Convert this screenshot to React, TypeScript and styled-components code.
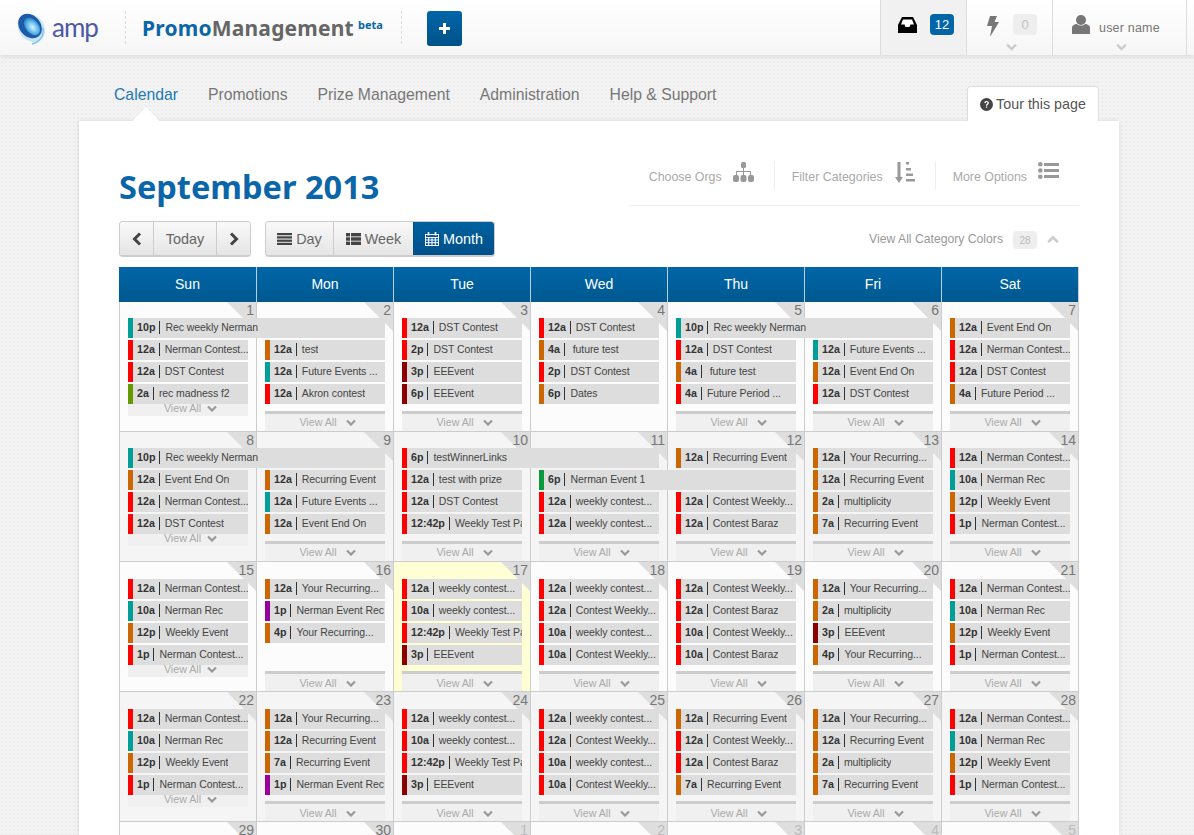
import React from "react";
import styled, { createGlobalStyle } from "styled-components";

const Global = createGlobalStyle`
  html, body { margin: 0; padding: 0; height: 835px; overflow: hidden; }
  body {
    font-family: "Liberation Sans", Arial, sans-serif;
    background-color: #f3f3f3;
    background-image: radial-gradient(#ececec 1px, transparent 1px);
    background-size: 4px 4px;
  }
`;

const Page = styled.div`
  height: 835px;
  overflow: hidden;
`;

const TopBar = styled.header`
  height: 55px;
  display: flex;
  align-items: stretch;
  background: linear-gradient(#ffffff, #f6f6f6);
  box-shadow: 0 1px 4px rgba(0, 0, 0, 0.12);
  position: relative;
`;

const LogoBox = styled.div`
  width: 125px;
  flex: none;
  display: flex;
  align-items: center;
  padding-left: 17px;
  box-sizing: border-box;
  gap: 5px;
`;

const AmpWord = styled.span`
  font-family: "Lato", sans-serif;
  font-weight: 400;
  font-size: 26px;
  line-height: 30px;
  color: #4f57a6;
  letter-spacing: -1px;
  margin-top: -2px;
`;

const DashedBlock = styled.div`
  border-left: 1px dashed #ddd;
  border-right: 1px dashed #ddd;
  margin: 11px 0;
  width: 277px;
  height: 33px;
  flex: none;
  display: flex;
  align-items: center;
  padding-left: 16px;
  box-sizing: border-box;
`;

const Brand = styled.span`
  font-family: "Noto Sans", sans-serif;
  font-weight: 700;
  font-size: 21px;
  letter-spacing: 0.2px;
  color: #666;
  white-space: nowrap;
`;

const BrandBlue = styled.span`
  color: #0a66a8;
`;

const Beta = styled.span`
  font-family: "Noto Sans", sans-serif;
  font-weight: 700;
  font-size: 11px;
  line-height: 14px;
  color: #0a66a8;
  margin: -6px 0 0 4px;
`;

const PlusButton = styled.button`
  width: 35px;
  height: 35px;
  flex: none;
  margin: 11px 0 0 25px;
  padding: 0;
  border: 0;
  border-radius: 3px;
  background: linear-gradient(#0066a8, #005189);
  color: #fff;
  display: flex;
  align-items: center;
  justify-content: center;
`;

const Spacer = styled.div`
  flex: 1;
`;

const Section = styled.div<{ $w: number; $active?: boolean }>`
  width: ${(p) => p.$w}px;
  flex: none;
  box-sizing: border-box;
  border-left: 1px solid #ddd;
  position: relative;
  background: ${(p) => (p.$active ? "#f1f1f1" : "transparent")};
  display: flex;
  align-items: flex-start;
`;

const IconSlot = styled.span<{ $t: number; $l: number; $r: number }>`
  display: flex;
  margin: ${(p) => p.$t}px ${(p) => p.$r}px 0 ${(p) => p.$l}px;
`;

const Count = styled.span<{ $on?: boolean }>`
  width: 24px;
  height: 21px;
  margin-top: 14px;
  border-radius: 4px;
  background: ${(p) => (p.$on ? "#0066a8" : "#eeeeee")};
  color: ${(p) => (p.$on ? "#fff" : "#c4c4c4")};
  font-size: 13px;
  line-height: 21px;
  text-align: center;
  flex: none;
`;

const Caret = styled.span<{ $shift: number }>`
  position: absolute;
  left: 0;
  right: 0;
  top: 43px;
  padding-left: ${(p) => p.$shift}px;
  display: flex;
  justify-content: center;
  color: #ccc;
`;

const UserName = styled.span`
  font-size: 12.5px;
  color: #777;
  margin-top: 21px;
  letter-spacing: 0.2px;
`;

const BarEnd = styled.div`
  width: 8px;
  border-left: 1px solid #ddd;
  box-sizing: border-box;
`;

const NavRow = styled.nav`
  height: 66px;
  padding-left: 114px;
  box-sizing: border-box;
  display: flex;
  gap: 30px;
  position: relative;
`;

const NavItem = styled.a<{ $active?: boolean }>`
  font-size: 15.75px;
  line-height: 18px;
  margin-top: 31px;
  color: ${(p) => (p.$active ? "#2378b5" : "#777")};
  position: relative;
  white-space: nowrap;
  ${(p) =>
    p.$active
      ? `&::after{content:"";position:absolute;left:19px;top:21px;border-left:13px solid transparent;border-right:13px solid transparent;border-bottom:14px solid #fff;}`
      : ""}
`;

const TourButton = styled.button`
  position: absolute;
  left: 967px;
  top: 31px;
  width: 132px;
  height: 35px;
  box-sizing: border-box;
  border: 1px solid #ddd;
  border-bottom: 0;
  border-radius: 4px 4px 0 0;
  background: #fff;
  font-family: "Liberation Sans", Arial, sans-serif;
  font-size: 14.3px;
  color: #555;
  display: flex;
  align-items: center;
  justify-content: center;
  gap: 3px;
  padding: 0;
`;

const Card = styled.main`
  width: 1040px;
  margin-left: 79px;
  height: 714px;
  background: #fff;
  box-shadow: 0 0 4px rgba(0, 0, 0, 0.12);
  padding: 0 40px;
  box-sizing: border-box;
`;

const TitleRow = styled.div`
  height: 100px;
  display: flex;
  justify-content: space-between;
`;

const Title = styled.h1`
  margin: 42px 0 0;
  font-family: "Noto Sans", sans-serif;
  font-weight: 700;
  font-size: 32.5px;
  line-height: 48px;
  color: #0a66a8;
  white-space: nowrap;
`;

const OptionsBar = styled.div`
  width: 450px;
  height: 85px;
  box-sizing: border-box;
  border-bottom: 1px solid #eee;
  display: flex;
  justify-content: flex-end;
  padding: 40px 20px 0 0;
`;

const Option = styled.div<{ $gap: number; $first?: boolean }>`
  display: flex;
  align-items: flex-start;
  height: 29px;
  gap: ${(p) => p.$gap}px;
  padding: 0 20px 0 17px;
  border-left: ${(p) => (p.$first ? "0" : "1px solid #eee")};
  font-size: 12.4px;
  line-height: 32px;
  color: #aaa;
  white-space: nowrap;
  &:last-child { padding-right: 0; }
  svg { color: #999; margin-top: 1px; }
`;

const ToolRow = styled.div`
  height: 46px;
  display: flex;
  gap: 14px;
  align-items: flex-start;
`;

const BtnGroup = styled.div`
  display: flex;
  height: 36px;
  box-sizing: border-box;
  border: 1px solid #ccc;
  border-bottom-width: 2px;
  border-radius: 4px;
  overflow: hidden;
`;

const Btn = styled.button<{ $w: number; $on?: boolean }>`
  width: ${(p) => p.$w}px;
  box-sizing: border-box;
  border: 0;
  padding: 0;
  border-left: 1px solid ${(p) => (p.$on ? "#00508a" : "#ccc")};
  &:first-child { border-left: 0; }
  background: ${(p) => (p.$on ? "linear-gradient(#00619f,#00508a)" : "linear-gradient(#f9f9f9,#e5e5e5)")};
  color: ${(p) => (p.$on ? "#fff" : "#666")};
  font-family: "Liberation Sans", Arial, sans-serif;
  font-size: 14.4px;
  display: flex;
  align-items: center;
  justify-content: center;
  gap: 4px;
`;

const ColorLink = styled.div`
  margin-left: auto;
  display: flex;
  align-items: center;
  height: 36px;
  font-size: 12.2px;
  color: #999;
  padding-right: 20px;
`;

const ColorBadge = styled.span`
  margin-left: 10px;
  width: 24px;
  height: 18px;
  margin-top: 2px;
  background: #eee;
  border-radius: 4px;
  color: #bbb;
  font-size: 10px;
  line-height: 19px;
  text-align: center;
`;

const UpCaret = styled.span`
  margin-left: 10px;
  display: flex;
  color: #ccc;
`;

const Calendar = styled.section`
  width: 960px;
  border-right: 1px solid #ccc;
  box-sizing: border-box;
`;

const HeadRow = styled.div`
  display: grid;
  grid-template-columns: repeat(7, 137px);
  height: 35px;
  background: linear-gradient(#0066a8, #00588f);
`;

const HeadCell = styled.div`
  color: #fff;
  font-size: 14px;
  line-height: 35px;
  text-align: center;
  border-left: 1px solid #b9cfdf;
  &:first-child { border-left: 0; }
`;

const Week = styled.div`
  display: grid;
  grid-template-columns: repeat(7, 137px);
  height: 130px;
`;

const Day = styled.div<{ $alt?: boolean; $today?: boolean; $late?: boolean }>`
  position: relative;
  box-sizing: border-box;
  height: 130px;
  border-left: 1px solid #ccc;
  border-bottom: 1px solid #ccc;
  padding: ${(p) => (p.$late ? 17 : 16)}px 0 0 8px;
  background: ${(p) => (p.$today ? "#ffffd6" : p.$alt ? "#f5f5f5" : "#fcfcfc")};
  display: flex;
  flex-direction: column;
  align-items: flex-start;
  &::before {
    content: "";
    position: absolute;
    top: 0;
    right: 0;
    border-top: 29px solid #dedede;
    border-left: 29px solid transparent;
  }
`;

const DayNum = styled.span<{ $muted?: boolean }>`
  position: absolute;
  top: 0;
  right: 2px;
  font-size: 14px;
  line-height: 16px;
  color: ${(p) => (p.$muted ? "#bbb" : "#777")};
`;

const EventBar = styled.div<{ $color: string; $span: number }>`
  position: relative;
  z-index: 1;
  flex: none;
  box-sizing: border-box;
  width: ${(p) => 120 + (p.$span - 1) * 137}px;
  height: 20px;
  margin-bottom: 2px;
  background: #dddddd;
  border-left: 5px solid ${(p) => p.$color};
  padding: 0 0 2px 4px;
  display: flex;
  align-items: center;
  font-size: 10.7px;
  color: #444;
  white-space: pre;
  overflow: hidden;
`;

const EventClip = styled.div<{ $w: number }>`
  display: flex;
  align-items: center;
  overflow: hidden;
  max-width: ${(p) => p.$w}px;
`;

const Time = styled.b`
  color: #333;
  padding-right: 4px;
  margin-right: 5px;
  border-right: 1px solid #333;
  line-height: 13px;
  flex: none;
`;

const EventName = styled.span`
  font-size: 10.5px;
  letter-spacing: -0.08px;
`;

const Blank = styled.div`
  flex: none;
  height: 22px;
`;

const Flush = styled.div`
  margin-top: -2px;
  width: 120px;
  height: 12px;
  box-sizing: border-box;
  padding-left: 5px;
  background: #f0f0f0;
  font-size: 10.7px;
  line-height: 8px;
  color: #aaa;
  display: flex;
  justify-content: center;
  align-items: flex-start;
  gap: 6px;
  flex: none;
  svg { margin-top: 1px; color: #999; }
`;

const More = styled.div<{ $late?: boolean }>`
  position: absolute;
  left: 8px;
  top: 109px;
  width: 120px;
  height: 20px;
  box-sizing: border-box;
  padding-left: 5px;
  border-top: 3px solid #cccccc;
  background: #f0f0f0;
  font-size: 10.7px;
  line-height: ${(p) => (p.$late ? 19 : 17)}px;
  color: #aaa;
  display: flex;
  justify-content: center;
  align-items: flex-start;
  gap: 9px;
  svg { margin-top: ${(p) => (p.$late ? 6 : 5)}px; color: #999; }
`;

const Chevron = ({ size = 10, up = false }: { size?: number; up?: boolean }) => (
  <svg width={size} height={size * 0.7} viewBox="0 0 10 7" fill="none">
    <path d={up ? "M1 6 L5 2 L9 6" : "M1 1.5 L5 5.5 L9 1.5"} stroke="currentColor" strokeWidth="2.2" />
  </svg>
);

const Logo = () => (
  <svg width="30" height="36" viewBox="0 0 30 36">
    <defs>
      <radialGradient id="lg" cx="55%" cy="50%" r="55%">
        <stop offset="0" stopColor="#d8f2fb" />
        <stop offset="0.6" stopColor="#63bdea" />
        <stop offset="1" stopColor="#2a7cc6" />
      </radialGradient>
    </defs>
    <ellipse cx="14.5" cy="18" rx="15" ry="12.5" transform="rotate(50 14.5 18)" fill="#bfe2f4" opacity=".85" />
    <ellipse cx="13" cy="16" rx="13.5" ry="10.5" transform="rotate(50 13 16)" fill="#1d5aa8" />
    <ellipse cx="15" cy="16.5" rx="10" ry="6.6" transform="rotate(50 15 16.5)" fill="url(#lg)" />
    <path d="M26 18 C27 26 23 32 15 34" stroke="#7cc7ee" strokeWidth="1.6" fill="none" />
  </svg>
);

const InboxIcon = () => (
  <svg width="19" height="16" viewBox="0 0 19 16">
    <path d="M4 0 H15 L19 8 V16 H0 V8 Z" fill="#000" />
    <path d="M5 2.5 H14 L16 7.5 H12.5 L11.5 10 H7.5 L6.5 7.5 H3 Z" fill="#fff" />
  </svg>
);

const BoltIcon = () => (
  <svg width="12" height="21" viewBox="0 0 12 21">
    <path d="M3 0 H10 L7.5 6 L12 6 L3 21 L5 10 H0 Z" fill="#777" />
  </svg>
);

const UserIcon = () => (
  <svg width="18" height="19" viewBox="0 0 18 19">
    <circle cx="9" cy="5" r="5" fill="#777" />
    <path d="M0 19 V13 C0 10 3 9 5 9 C7 11 11 11 13 9 C15 9 18 10 18 13 V19 Z" fill="#777" />
  </svg>
);

const QuestionIcon = () => (
  <svg width="13" height="13" viewBox="0 0 13 13">
    <circle cx="6.5" cy="6.5" r="6.5" fill="#444" />
    <path d="M4.3 5 C4.4 3.6 5.3 3 6.6 3 C8 3 8.9 3.8 8.9 4.9 C8.9 6.3 7.2 6.3 7.2 7.7 H5.9 C5.8 5.8 7.5 5.8 7.5 4.9 C7.5 4.4 7.1 4.1 6.6 4.1 C6 4.1 5.7 4.5 5.6 5.2 Z M5.9 8.4 H7.2 V9.8 H5.9 Z" fill="#fff" />
  </svg>
);

const SitemapIcon = () => (
  <svg width="21" height="20" viewBox="0 0 21 20" fill="#999">
    <rect x="8" y="0" width="5" height="6" rx="1.5" />
    <rect x="10" y="6" width="1" height="4" />
    <rect x="3" y="9" width="15" height="1" />
    <rect x="3" y="9" width="1" height="4" />
    <rect x="17" y="9" width="1" height="4" />
    <rect x="10" y="9" width="1" height="4" />
    <rect x="0" y="13" width="6" height="7" rx="2" />
    <rect x="7.5" y="13" width="6" height="7" rx="2" />
    <rect x="15" y="13" width="6" height="7" rx="2" />
  </svg>
);

const SortIcon = () => (
  <svg width="20" height="22" viewBox="0 0 20 22" fill="#999">
    <rect x="2.5" y="0" width="3" height="17" />
    <path d="M0 15 H8 L4 21 Z" />
    <rect x="11" y="0" width="3" height="2.5" />
    <rect x="11" y="6" width="5" height="2.5" />
    <rect x="11" y="11.5" width="7" height="2.5" />
    <rect x="11" y="17" width="9" height="2.5" />
  </svg>
);

const ListUlIcon = () => (
  <svg width="21" height="17" viewBox="0 0 21 17" fill="#999">
    <circle cx="2.3" cy="2.3" r="2.3" />
    <circle cx="2.3" cy="8.5" r="2.3" />
    <circle cx="2.3" cy="14.7" r="2.3" />
    <rect x="6" y="1" width="15" height="3" />
    <rect x="6" y="7" width="15" height="3" />
    <rect x="6" y="13" width="15" height="3" />
  </svg>
);

const ArrowLeft = () => (
  <svg width="10" height="14" viewBox="0 0 10 14" fill="none">
    <path d="M8 1.5 L2.5 7 L8 12.5" stroke="#444" strokeWidth="3" />
  </svg>
);
const ArrowRight = () => (
  <svg width="10" height="14" viewBox="0 0 10 14" fill="none">
    <path d="M2 1.5 L7.5 7 L2 12.5" stroke="#444" strokeWidth="3" />
  </svg>
);
const LinesIcon = () => (
  <svg width="15" height="12" viewBox="0 0 15 12" fill="#444">
    <rect y="0" width="15" height="2.2" /><rect y="3.3" width="15" height="2.2" /><rect y="6.6" width="15" height="2.2" /><rect y="9.8" width="15" height="2.2" />
  </svg>
);
const ThListIcon = () => (
  <svg width="15" height="12" viewBox="0 0 15 12" fill="#444">
    <rect y="0" width="4" height="3.4" /><rect x="5" y="0" width="10" height="3.4" />
    <rect y="4.3" width="4" height="3.4" /><rect x="5" y="4.3" width="10" height="3.4" />
    <rect y="8.6" width="4" height="3.4" /><rect x="5" y="8.6" width="10" height="3.4" />
  </svg>
);
const CalIcon = () => (
  <svg width="14" height="14" viewBox="0 0 14 14" fill="none" stroke="#fff" strokeWidth="1">
    <rect x=".5" y="2.5" width="13" height="11" />
    <path d="M.5 5.5 H13.5 M.5 8 H13.5 M.5 10.7 H13.5 M3.7 5.5 V13.5 M7 5.5 V13.5 M10.3 5.5 V13.5" />
    <path d="M3.5 0 V3.5 M10.5 0 V3.5" strokeWidth="1.6" />
  </svg>
);

const C = { r: "#ff0000", t: "#009e96", o: "#cc6600", d: "#8b0000", l: "#669900", g: "#0a9a3a", p: "#990099" };
type Ck = keyof typeof C;
type Ev = [Ck, string, string, number?] | null;
type DayData = { n: number; ev: Ev[]; more?: "flush" | "bar" | "none"; today?: boolean };

const nc1: Ev = ["r", "12a", "Nerman Contest..."];
const dst: Ev = ["r", "12a", "DST Contest"];
const rec: Ev = ["t", "10p", "Rec weekly Nerman", 2];
const fut: Ev = ["t", "12a", "Future Events ..."];
const eeo: Ev = ["o", "12a", "Event End On"];
const re1: Ev = ["o", "12a", "Recurring Event"];
const yr1: Ev = ["o", "12a", "Your Recurring..."];
const wc1: Ev = ["r", "12a", "weekly contest..."];
const wc2: Ev = ["r", "10a", "weekly contest..."];
const cw1: Ev = ["r", "12a", "Contest Weekly..."];
const cw2: Ev = ["r", "10a", "Contest Weekly..."];
const cb1: Ev = ["r", "12a", "Contest Baraz"];
const cb2: Ev = ["r", "10a", "Contest Baraz"];
const mul: Ev = ["o", "2a", "multiplicity"];
const re7: Ev = ["o", "7a", "Recurring Event"];
const ee3: Ev = ["d", "3p", "EEEvent"];
const wtp: Ev = ["r", "12:42p", "Weekly Test Pa"];
const nrec: Ev = ["t", "10a", "Nerman Rec"];
const wev: Ev = ["o", "12p", "Weekly Event"];
const nc2: Ev = ["r", "1p", "Nerman Contest..."];
const ner: Ev = ["p", "1p", "Nerman Event Rec"];
const nstd: Ev[] = [nc1, nrec, wev, nc2];

const weeks: DayData[][] = [
  [
    { n: 1, more: "flush", ev: [rec, nc1, dst, ["l", "2a", "rec madness f2"]] },
    { n: 2, ev: [null, ["o", "12a", "test"], fut, ["r", "12a", "Akron contest"]] },
    { n: 3, ev: [dst, ["r", "2p", "DST Contest"], ["d", "3p", "EEEvent"], ["d", "6p", "EEEvent"]] },
    { n: 4, more: "none", ev: [dst, ["o", "4a", " future test"], ["r", "2p", "DST Contest"], ["o", "6p", "Dates"]] },
    { n: 5, ev: [rec, dst, ["o", "4a", " future test"], ["r", "4a", "Future Period ..."]] },
    { n: 6, ev: [null, fut, eeo, dst] },
    { n: 7, ev: [eeo, nc1, dst, ["o", "4a", "Future Period ..."]] },
  ],
  [
    { n: 8, more: "flush", ev: [rec, eeo, nc1, dst] },
    { n: 9, ev: [null, re1, fut, eeo] },
    { n: 10, ev: [["r", "6p", "testWinnerLinks", 2], ["r", "12a", "test with prize"], dst, wtp] },
    { n: 11, ev: [null, ["g", "6p", "Nerman Event 1", 2], wc1, wc1] },
    { n: 12, ev: [re1, null, cw1, cb1] },
    { n: 13, ev: [yr1, re1, mul, re7] },
    { n: 14, ev: nstd },
  ],
  [
    { n: 15, more: "flush", ev: nstd },
    { n: 16, ev: [yr1, ner, ["o", "4p", "Your Recurring..."]] },
    { n: 17, today: true, ev: [wc1, wc2, wtp, ee3] },
    { n: 18, ev: [wc1, cw1, wc2, cw2] },
    { n: 19, ev: [cw1, cb1, cw2, cb2] },
    { n: 20, ev: [yr1, mul, ee3, ["o", "4p", "Your Recurring..."]] },
    { n: 21, ev: nstd },
  ],
  [
    { n: 22, more: "flush", ev: nstd },
    { n: 23, ev: [yr1, re1, re7, ner] },
    { n: 24, ev: [wc1, wc2, wtp, ee3] },
    { n: 25, ev: [wc1, cw1, wc2, cw2] },
    { n: 26, ev: [re1, cw1, cb1, re7] },
    { n: 27, ev: [yr1, re1, mul, re7] },
    { n: 28, ev: nstd },
  ],
];

const nextRow = [29, 30, 1, 2, 3, 4, 5];

const ViewText = () => (
  <>
    <span>View All</span>
    <Chevron size={10} />
  </>
);

export default function App() {
  return (
    <Page>
      <Global />
      <TopBar>
        <LogoBox>
          <Logo />
          <AmpWord>amp</AmpWord>
        </LogoBox>
        <DashedBlock>
          <Brand>
            <BrandBlue>Promo</BrandBlue>Management
          </Brand>
          <Beta>beta</Beta>
        </DashedBlock>
        <PlusButton aria-label="Add">
          <svg width="11" height="11" viewBox="0 0 11 11" fill="#fff">
            <rect x="4" width="3" height="11" />
            <rect y="4" width="11" height="3" />
          </svg>
        </PlusButton>
        <Spacer />
        <Section $w={86} $active>
          <IconSlot $t={17} $l={17} $r={13}><InboxIcon /></IconSlot>
          <Count $on>12</Count>
        </Section>
        <Section $w={86}>
          <IconSlot $t={16} $l={20} $r={14}><BoltIcon /></IconSlot>
          <Count>0</Count>
          <Caret $shift={3}><Chevron size={11} /></Caret>
        </Section>
        <Section $w={134}>
          <IconSlot $t={15} $l={19} $r={9}><UserIcon /></IconSlot>
          <UserName>user name</UserName>
          <Caret $shift={4}><Chevron size={11} /></Caret>
        </Section>
        <BarEnd />
      </TopBar>

      <NavRow>
        <NavItem $active>Calendar</NavItem>
        <NavItem>Promotions</NavItem>
        <NavItem>Prize Management</NavItem>
        <NavItem>Administration</NavItem>
        <NavItem>Help &amp; Support</NavItem>
        <TourButton>
          <QuestionIcon /> Tour this page
        </TourButton>
      </NavRow>

      <Card>
        <TitleRow>
          <Title>September 2013</Title>
          <OptionsBar>
            <Option $first $gap={11}>
              Choose Orgs <SitemapIcon />
            </Option>
            <Option $gap={12}>
              Filter Categories <SortIcon />
            </Option>
            <Option $gap={11}>
              More Options <ListUlIcon />
            </Option>
          </OptionsBar>
        </TitleRow>

        <ToolRow>
          <BtnGroup>
            <Btn $w={33} aria-label="Previous"><ArrowLeft /></Btn>
            <Btn $w={63}>Today</Btn>
            <Btn $w={34} aria-label="Next"><ArrowRight /></Btn>
          </BtnGroup>
          <BtnGroup>
            <Btn $w={67}><LinesIcon /> Day</Btn>
            <Btn $w={80}><ThListIcon /> Week</Btn>
            <Btn $w={81} $on><CalIcon /> Month</Btn>
          </BtnGroup>
          <ColorLink>
            View All Category Colors
            <ColorBadge>28</ColorBadge>
            <UpCaret><Chevron size={12} up /></UpCaret>
          </ColorLink>
        </ToolRow>

        <Calendar>
          <HeadRow>
            {["Sun", "Mon", "Tue", "Wed", "Thu", "Fri", "Sat"].map((d) => (
              <HeadCell key={d}>{d}</HeadCell>
            ))}
          </HeadRow>
          {weeks.map((w, i) => (
            <Week key={i}>
              {w.map((d) => (
                <Day key={d.n} $alt={i % 2 === 1} $today={d.today} $late={i >= 2}>
                  <DayNum>{d.n}</DayNum>
                  {d.ev.map((e, k) =>
                    e ? (
                      <EventBar key={k} $color={C[e[0]]} $span={e[3] ?? 1}>
                        <EventClip $w={e[3] ? 121 : 115}>
                          <Time>{e[1]}</Time>
                          <EventName>{e[2]}</EventName>
                        </EventClip>
                      </EventBar>
                    ) : (
                      <Blank key={k} />
                    )
                  )}
                  {d.more === "flush" && (
                    <Flush><ViewText /></Flush>
                  )}
                  {d.more !== "flush" && d.more !== "none" && (
                    <More $late={i >= 2}><ViewText /></More>
                  )}
                </Day>
              ))}
            </Week>
          ))}
          <Week>
            {nextRow.map((n, idx) => (
              <Day key={idx}>
                <DayNum $muted={idx > 1}>{n}</DayNum>
              </Day>
            ))}
          </Week>
        </Calendar>
      </Card>
    </Page>
  );
}
